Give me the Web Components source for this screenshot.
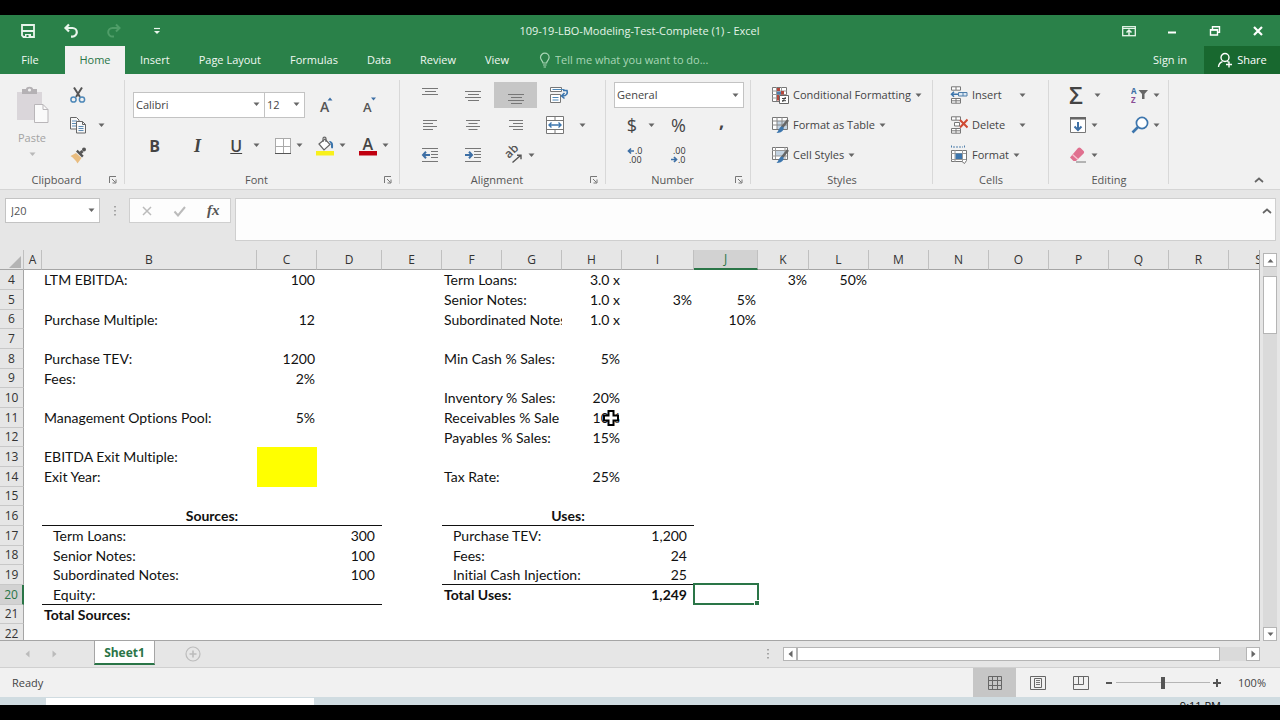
<!DOCTYPE html>
<html lang="en">
<head>
<meta charset="utf-8">
<title>109-19-LBO-Modeling-Test-Complete (1) - Excel</title>
<style>
    html, body {
        margin: 0;
        height: 100%;
        background: #000;
    }
</style>
</head>
<body>
<xl-app></xl-app>

<script>
'use strict'

// [width, height, markup]
const ICONS = {
    save: [16, 16, `<path d="M2 2h12v12H3.500L2 12.500z" fill="none" stroke="#e9f5ec" stroke-width="1.800"/><path d="M2 8h12" stroke="#e9f5ec" stroke-width="2"/><path d="M5 11h6v3H5z" fill="#e9f5ec"/><path d="M6.500 12h2v2h-2z" fill="#2a8149"/>`],
    undo: [16, 16, `<path d="M6 1.500 2.500 5 6 8.500M3 5h6.500a4.300 4.300 0 0 1 0 8.600H8" fill="none" stroke="#e9f5ec" stroke-width="2.200"/>`],
    redo: [16, 16, `<path d="M10 1.500 13.500 5 10 8.500M13 5H6.500a4.300 4.300 0 0 0 0 8.600H8" fill="none" stroke="#4f9d68" stroke-width="2"/>`],
    custom: [8, 8, `<path d="M1 1.500h6" stroke="#e9f5ec" stroke-width="1.200"/><path d="M1 4h6L4 7z" fill="#e9f5ec"/>`],
    ribbonopts: [14, 12, `<rect x=".7" y="1.700" width="12.600" height="9" fill="none" stroke="#e9f5ec" stroke-width="1.300"/><path d="M1 3.500h12" stroke="#e9f5ec"/><path d="M7 10V6M4.500 7.500 7 5l2.500 2.500" fill="none" stroke="#e9f5ec" stroke-width="1.500"/>`],
    min: [10, 10, `<path d="M1 6.500h8" stroke="#fff" stroke-width="2"/>`],
    restore: [12, 12, `<path d="M3.500 4V1.700h7v5.600H8.500M1.500 4.700h7V10h-7z" fill="none" stroke="#fff" stroke-width="1.400"/><path d="M1.500 5h7" stroke="#fff" stroke-width="1.500"/>`],
    close: [12, 12, `<path d="m2 2 8 8m0-8-8 8" stroke="#fff" stroke-width="2.200"/>`],
    bulb: [12, 16, `<path d="M4 11c0-2-2.500-3-2.500-5.500a4.300 4.300 0 0 1 8.600 0C10.100 8 7.600 9 7.600 11zM4 13h3.600M4.600 15h2.400" fill="none" stroke="#a9d6b6" stroke-width="1.200"/>`],
    person: [16, 16, `<circle cx="8" cy="5.500" r="4" fill="none" stroke="#fff" stroke-width="1.400"/><path d="M1.500 15c.3-3 1.800-4.600 4-5.300M10.300 9.300l1.200.7M9 12.500h6M12 9.500v6" fill="none" stroke="#fff" stroke-width="1.400"/>`],
    paste: [34, 38, `<path d="M2 6h25v28H2z" fill="#dad6da"/><path d="M7 3h4c0-3 7-3 7 0h4v5H7z" fill="#b4b1b4"/><circle cx="14.500" cy="4" r="1.600" fill="#f1f1f1"/><path d="M19.500 18.500H28l5 5V36.500H19.500z" fill="#fafafa" stroke="#b9b6b9"/><path d="M28 18.500v5h5" fill="none" stroke="#b9b6b9"/>`],
    cut: [18, 18, `<path d="M5 1.500 11 11M13 1.500 7 11" stroke="#555" stroke-width="2"/><circle cx="4.500" cy="13.500" r="2.600" fill="none" stroke="#4e88b8" stroke-width="1.500"/><circle cx="13" cy="13.500" r="2.600" fill="none" stroke="#4e88b8" stroke-width="1.500"/>`],
    copy: [18, 18, `<path d="M1.500 1.500h6l2.500 2.500v9H1.500z" fill="#f8f8f8" stroke="#666"/><path d="M3 5h5M3 7.500h5M3 10h4" stroke="#5c8bb5"/><path d="M7.500 5.500h6l3 3v8.500h-9z" fill="#f8f8f8" stroke="#666"/><path d="M13.500 5.500v3h3" fill="none" stroke="#666"/><path d="M9.500 10.500h5M9.500 12.500h5M9.500 14.500h5" stroke="#5c8bb5"/>`],
    painter: [18, 18, `<path d="m1.500 10 5.500-3 5.500 5-4 5.500c-1.500-3-4-5.500-7-7.500z" fill="#e9bd80"/><path d="m7 5.500 6 6 1.700-1.700-6-6z" fill="#555"/><path d="m11.500 7 2-2" stroke="#555" stroke-width="3"/><circle cx="15" cy="3.500" r="2" fill="#555"/>`],
    growfont: [16, 18, `<text x="1" y="16" font-size="14" font-weight="600" fill="#555">A</text><path d="M8.500 4.500h5L11 1.500z" fill="#3d6fa5"/>`],
    shrinkfont: [16, 18, `<text x="1" y="16" font-size="13" font-weight="600" fill="#555">A</text><path d="M9 1.500h5l-2.500 3z" fill="#3d6fa5"/>`],
    borders: [18, 18, `<path d="M1 1h16v16H1z" fill="#fff"/><path d="M1.500 1v15M9.500 1v15M16.500 1v15M1 1.500h16M1 9.500h16" fill="none" stroke="#aaa"/><path d="M1 16.500h16" stroke="#555"/>`],
    fill: [20, 20, `<path d="m4 8 6-5 5 5.500-6 5.500z" fill="#fff" stroke="#666" stroke-width="1.200"/><path d="M8 6V2.500c0-1.800 3-1.800 3 0V6" fill="none" stroke="#666" stroke-width="1.200"/><path d="M14 5c3.500 0 4.500 2 4 7-1.200 1-2.200 0-2-1.500.2-2-.5-3.500-2-5.500z" fill="#3d76ad"/><path d="M1 15h18v4.500H1z" fill="#f8f01c"/>`],
    fontcolor: [20, 20, `<text x="4.500" y="14" font-size="16" font-weight="600" fill="#444">A</text><path d="M1 15h18v4.500H1z" fill="#c00010"/>`],
    top: [18, 18, `<path d="M1 2.500h16M4 5.500h11M1 8.500h16" stroke="#777"/>`],
    middle: [18, 18, `<path d="M1 5.500h16M4 8.500h11M1 11.500h16M4 14.500h11" stroke="#777"/>`],
    bottom: [18, 18, `<path d="M1 8.500h16M4 11.500h11M1 14.500h16M4 17.500h11" stroke="#777"/>`],
    wrap: [20, 18, `<path d="M1.500 1.500h11v4h-11zM1.500 8.500h10v8h-10z" fill="#fff" stroke="#777"/><path d="M3.500 11.500h6M3.500 14h6M3.500 3.500h12" stroke="#4e88b8"/><path d="M14 4.500h4c1 3-.5 5.500-4.500 5.500M15.500 7l-3 3 3 2.500" fill="none" stroke="#3d76ad" stroke-width="1.600"/>`],
    left: [16, 14, `<path d="M1 2.500h14M1 5.500h10M1 8.500h14M1 11.500h10" stroke="#777"/>`],
    center: [16, 14, `<path d="M1 2.500h14M3.500 5.500h9M1 8.500h14M3.500 11.500h9" stroke="#777"/>`],
    right: [16, 14, `<path d="M1 2.500h14M5 5.500h10M1 8.500h14M5 11.500h10" stroke="#777"/>`],
    merge: [20, 20, `<path d="M1.500 1.500h17v17h-17z" fill="#fff" stroke="#777"/><path d="M1 5.500h18M1 14.500h18M10 1v4M10 15v4" stroke="#777"/><path d="M4 10h12M6.500 7.500 4 10l2.500 2.500M13.500 7.500 16 10l-2.500 2.500" fill="none" stroke="#3d76ad" stroke-width="1.400"/>`],
    outdent: [18, 16, `<path d="M1 1.500h16M10 4.500h7M10 7.500h7M10 10.500h7M1 14.500h16" stroke="#777"/><path d="M9 8H2M5 4.800 2 8l3 3.200" fill="none" stroke="#3d6fa5" stroke-width="2"/>`],
    indent: [18, 16, `<path d="M1 1.500h16M10 4.500h7M10 7.500h7M10 10.500h7M1 14.500h16" stroke="#777"/><path d="M1 8h7M5 4.800 8 8l-3 3.200" fill="none" stroke="#3d6fa5" stroke-width="2"/>`],
    orient: [20, 18, `<text x="0" y="0" transform="translate(5 13) rotate(-45)" font-size="12" font-weight="600" fill="#555">ab</text><path d="m8.500 16.500 8-7M13 9.300h4v4" fill="none" stroke="#555" stroke-width="1.400"/>`],
    incdec: [18, 18, `<path d="M7 5H1.500M4 2.500 1.500 5 4 7.500" fill="none" stroke="#3d6fa5" stroke-width="1.700"/><text x="8" y="8" font-size="9" fill="#333">.0</text><text x="2" y="17" font-size="9" fill="#333">.00</text>`],
    decdec: [18, 18, `<path d="M1 13.500h5.500M4 11l2.500 2.500L4 16" fill="none" stroke="#3d6fa5" stroke-width="1.700"/><text x="3" y="8" font-size="9" fill="#333">.00</text><text x="8" y="17" font-size="9" fill="#333">.0</text>`],
    cond: [18, 18, `<path d="M1.500 1.500h14v14h-14z" fill="#fff" stroke="#777"/><path d="M5.500 1v14M10.500 1v14M1 5h15M1 8.500h15M1 12h15" stroke="#999"/><path d="M6 2h3v3H6zM10 5h3v3.500h-3z" fill="#b4473c"/><path d="M6 5.500h4v3H6z" fill="#4e7eab"/><path d="M6 9h2v5.500H6z" fill="#b4473c"/><path d="M8.500 9.500h9v8h-9z" fill="#fff" stroke="#666"/><path d="M11 12.500h4M11 14.700h4M14.500 11l-3 5" stroke="#444"/>`],
    table: [18, 18, `<path d="M1.500 1.500h15v12h-15z" fill="#fff" stroke="#777"/><path d="M6 5h10v8H6z" fill="#c3d3e2"/><path d="M6 1v12M11 1v12M1 5h15M1 9h15" stroke="#888"/><path d="m17 4-6.500 8" stroke="#666" stroke-width="2.600"/><path d="M10.500 10.500c1.700 0 2.700 1.200 2 3-1 2.500-4 3.500-7 3.500 2-1.500 2.500-5.500 5-6.500z" fill="#3d76ad"/>`],
    styles: [18, 18, `<path d="M1.500 1.500h15v12h-15z" fill="#fff" stroke="#777"/><path d="M5 5h9v5H5z" fill="#c3d3e2"/><path d="M4.500 1v12M14 1v12M1 4.500h15M1 10h15" stroke="#999"/><path d="m17 4-6.500 8" stroke="#666" stroke-width="2.600"/><path d="M10.500 10.500c1.700 0 2.700 1.200 2 3-1 2.500-4 3.500-7 3.500 2-1.500 2.500-5.500 5-6.500z" fill="#3d76ad"/>`],
    insert: [18, 18, `<path d="M1.500.8h9v3.400h-9zM6 1v3M1.500 12.500h9v4.700h-9zM1.500 14.800h9M6 12.500v4.700" fill="#fff" stroke="#777"/><path d="M8.500 6.500h8.500v3.500H8.500zM13 6.500V10" fill="#dbe7f2" stroke="#4e7eab"/><path d="M8 8.200H1.500M4 5.800 1.500 8.200 4 10.700" fill="none" stroke="#3d76ad" stroke-width="1.500"/>`],
    delete: [18, 18, `<path d="M1.500.8h9v3.400h-9zM6 1v3M1.500 12.500h9v4.700h-9zM1.500 14.800h9M6 12.500v4.700M4.500 6.500h5V10h-5z" fill="#fff" stroke="#777"/><path d="m10 4 7.500 7.500M17.500 3.500 10 11.500" stroke="#cf4a33" stroke-width="2"/>`],
    format: [18, 20, `<path d="M1.500.5v3M14.500.5v3M3 2h10" stroke="#4e7eab" stroke-dasharray="2 1"/><path d="M1.500 5.500h15v10l-2 3-2.500-2H1.500z" fill="#fff" stroke="#777"/><path d="M5 5v12M12.500 5v12M1 8.500h15M1 14.500h15" stroke="#999"/><path d="M5.500 8.500h6.500v5.500H5.500z" fill="#3d76ad"/>`],
    filldown: [18, 18, `<path d="M1.500 1.500h15v15h-15z" fill="#fff" stroke="#777"/><path d="M1 2.300h16" stroke="#666" stroke-width="2.500"/><path d="M9 6v8M5.500 10.500 9 14l3.500-3.500" fill="none" stroke="#3d6fa5" stroke-width="2"/>`],
    clear: [18, 18, `<path d="m1 11.500 8-9.500c.8-.8 1.800-.8 2.600 0l3 3c.7.700.7 1.600 0 2.400L7 15H4.500z" fill="#e0708f"/><path d="m3.500 8.500 5.500 5" stroke="#f6c4d0" stroke-width="1.300"/><path d="M7 16h10" stroke="#777"/>`],
    sort: [18, 20, `<text x="0" y="9" font-size="8" font-weight="700" fill="#3d6fa5">A</text><text x="0" y="18" font-size="8" font-weight="700" fill="#8a4d95">Z</text><path d="M7.500 5H17l-3.500 4v5h-2.500V9z" fill="#666"/>`],
    find: [18, 18, `<circle cx="11" cy="7" r="5.600" fill="#fff" stroke="#3d76ad" stroke-width="1.700"/><path d="m1.500 16.500 5.500-5.500" stroke="#3d76ad" stroke-width="2.600"/>`],
    launcher: [8, 8, `<path d="M.5 7V.5H7M3 3l3.500 3.500M7 3.500V7H3.500" fill="none" stroke="#777"/>`],
    up: [10, 6, `<path d="m1 5 4-3.500L9 5" fill="none" stroke="#666" stroke-width="1.700"/>`],
    x: [12, 12, `<path d="m2 2 8 8m0-8-8 8" stroke="#bbb" stroke-width="1.500"/>`],
    check: [14, 12, `<path d="m1.500 6.500 3.500 4L12 2" fill="none" stroke="#bbb" stroke-width="2"/>`],
    dots: [4, 12, `<path d="M1 1h2v1.500H1zM1 5h2v1.500H1zM1 9h2v1.500H1z" fill="#a5a5a5"/>`],
    triup: [7, 5, `<path d="M.5 4.500h6L3.500 1z" fill="#666"/>`],
    tridown: [7, 5, `<path d="M.5.5h6L3.500 4z" fill="#666"/>`],
    trileft: [5, 8, `<path d="M4.500.5v7L.5 4z" fill="currentColor"/>`],
    triright: [5, 8, `<path d="M.5.5v7l4-3.500z" fill="currentColor"/>`],
    add: [16, 16, `<circle cx="8" cy="8" r="7" fill="none" stroke="#bcbcbc" stroke-width="1.200"/><path d="M8 4.500v7M4.500 8h7" stroke="#bcbcbc" stroke-width="1.600"/>`],
    normal: [16, 16, `<path d="M1.500 1.500h13v13h-13zM5.500 1v14M10.500 1v14M1 5.500h14M1 10.500h14" fill="none" stroke="#666"/>`],
    pagelayout: [16, 16, `<path d="M.5 1.500h15v13H.5zM4.500 3.500h7v9h-7z" fill="none" stroke="#666"/><path d="M6 5.500h4M6 7.500h4M6 9.500h4" stroke="#777"/>`],
    pagebreak: [16, 16, `<path d="M.5 1.500h15v13H.5zM.5 9.500h10v-8M5.500 1v8.500" fill="none" stroke="#666"/>`],
    minus: [8, 8, `<path d="M1 4h6" stroke="#555" stroke-width="2"/>`],
    plus: [8, 8, `<path d="M0 4h8M4 0v8" stroke="#555" stroke-width="2"/>`],
    cursor: [18, 18, `<path d="M6.500 2h5v4.500H16v5h-4.500V16h-5v-4.500H2v-5h4.500z" fill="#fff" stroke="#000" stroke-width="2"/>`]
}

const svg = name => {
    const [w, h, markup] = ICONS[name]
    return `<svg width="${w}" height="${h}" viewBox="0 0 ${w} ${h}" aria-hidden="true">${markup}</svg>`
}

const base = /* html */`
<style>
    * { box-sizing: border-box; }
    button, input, select, textarea {
        font: inherit;
        color: inherit;
        margin: 0;
        padding: 0;
        border: 0;
        border-radius: 0;
        background: none;
        outline: none;
    }
    button {
        display: flex;
        align-items: center;
        justify-content: center;
        white-space: nowrap;
    }
    svg { display: block; flex: none; }
</style>`

class XlElement extends HTMLElement {
    constructor() {
        super()
        this.attachShadow({mode: 'open'})
    }
    connectedCallback() {
        const template = document.createElement('template')
        template.innerHTML = base + this.render()
        this.shadowRoot.replaceChildren(template.content.cloneNode(true))
    }
}

// Ribbon button: optional icon, slotted text, optional drop-down arrow
class XlTool extends XlElement {
    render() {
        const icon = this.getAttribute('icon')
        const label = this.getAttribute('label')
        return /* html */`
<style>
    :host { display: flex; width: 43px; height: 26px; }
    :host([wide]) { width: auto; }
    :host([active]) { background: #c6c6c6; }
    button { flex: 1; gap: 4px; }
    :host([caret]:not([wide])) button { justify-content: flex-end; padding-right: 2px; }
    :host([wide]) button { justify-content: flex-start; }
    :host([spread]) svg:last-child { margin-left: auto; }
</style>
<button type="button" ${label ? `aria-label="${label}"` : ''}>${icon ? svg(icon) : ''}<slot></slot>${this.hasAttribute('caret') ? svg('tridown') : ''}</button>`
    }
}
customElements.define('xl-tool', XlTool)

class XlCombo extends XlElement {
    render() {
        return /* html */`
<style>
    :host { display: flex; align-items: center; height: 26px; padding-right: 4px; background: #fff; border: 1px solid #c3c3c3; }
    select { flex: 1; min-width: 0; height: 100%; padding-left: var(--inset, 2px); appearance: none; }
</style>
<select aria-label="${this.getAttribute('label')}"><option>${this.getAttribute('value')}</option></select>${svg('tridown')}`
    }
}
customElements.define('xl-combo', XlCombo)

class XlGroup extends XlElement {
    render() {
        return /* html */`
<style>
    :host { display: flex; flex-direction: column; flex: none; position: relative; }
    :host::after { content: ''; position: absolute; right: 0; top: 0; bottom: 5px; border-right: 1px solid #d8d8d8; }
    .body { height: 92px; }
    footer { display: flex; align-items: center; height: 18px; color: #555; }
    footer span { flex: 1; text-align: center; padding-left: 12px; }
    button { width: 24px; }
    i { width: 12px; }
</style>
<div class="body"><slot></slot></div>
<footer><span>${this.getAttribute('label')}</span>${this.hasAttribute('launcher') ? `<button type="button" aria-label="${this.getAttribute('label')} settings">${svg('launcher')}</button>` : '<i></i>'}</footer>`
    }
}
customElements.define('xl-group', XlGroup)

class XlTitlebar extends XlElement {
    render() {
        const btn = (icon, label) => `<button type="button" aria-label="${label}">${svg(icon)}</button>`
        return /* html */`
<style>
    :host { display: grid; grid-template-columns: 1fr auto 1fr; align-items: center; height: 31px; padding-right: 1px; color: #e4f3e8; background: #2a8149; }
    div { display: flex; padding-left: 6px; }
    div:last-child { justify-content: flex-end; }
    button { width: 43px; height: 28px; }
</style>
<div>${btn('save', 'Save')}${btn('undo', 'Undo')}${btn('redo', 'Redo')}${btn('custom', 'Customize Quick Access Toolbar')}</div>
<span>109-19-LBO-Modeling-Test-Complete (1) - Excel</span>
<div>${btn('ribbonopts', 'Ribbon Display Options')}${btn('min', 'Minimize')}${btn('restore', 'Restore Down')}${btn('close', 'Close')}</div>`
    }
}
customElements.define('xl-titlebar', XlTitlebar)

class XlTabs extends XlElement {
    render() {
        const tabs = ['Insert', 'Page Layout', 'Formulas', 'Data', 'Review', 'View']
        return /* html */`
<style>
    :host { display: flex; height: 28px; color: #f0f8f2; background: #2a8149; }
    nav { display: flex; }
    nav button { padding: 0 14px 0 15px; }
    nav .file { width: 65px; padding: 0 5px 0 0; }
    nav .home { width: 60px; padding: 0; color: #2a7547; background: #f1f1f1; }
    label { display: flex; flex: 1; align-items: center; gap: 4px; padding-left: 16px; }
    input { flex: 1; min-width: 0; }
    input::placeholder { color: #a9d6b6; opacity: 1; }
    .sign { padding: 0 17px; }
    .share { width: 76px; gap: 4px; color: #fff; background: #18682f; }
</style>
<nav><button type="button" class="file">File</button><button type="button" class="home">Home</button>${tabs.map(t => `<button type="button">${t}</button>`).join('')}</nav>
<label>${svg('bulb')}<input type="text" aria-label="Tell me what you want to do" placeholder="Tell me what you want to do..."></label>
<button type="button" class="sign">Sign in</button>
<button type="button" class="share">${svg('person')}Share</button>`
    }
}
customElements.define('xl-tabs', XlTabs)

class XlRibbon extends XlElement {
    render() {
        return /* html */`
<style>
    :host { display: flex; height: 116px; padding-top: 6px; color: #444; background: #f1f1f1; border-bottom: 1px solid #d5d5d5; }
    .row { display: flex; align-items: center; height: 30px; }
    .clipboard { width: 125px; }
    .font { width: 275px; }
    .alignment { width: 206px; }
    .number { width: 145px; }
    .styles { width: 182px; }
    .cells { width: 116px; }
    .editing { width: 120px; }
    .clip { display: flex; padding-left: 4px; }
    .paste { display: flex; flex-direction: column; justify-content: flex-start; gap: 6px; width: 56px; padding-top: 6px; color: #a3a3a3; }
    .paste svg:last-child { opacity: .4; }
    .narrow { width: 36px; }
    .arrow { width: 10px; }
    .more { width: 18px; }
    .pad { padding-left: 8px; }
    .font .row { height: 41px; }
    .font .pad { padding-top: 4px; }
    .family { width: 132px; }
    .size { width: 41px; margin-left: -1px; }
    .general { width: 130px; }
    b, .i, u, .sym { font-size: 16px; line-height: 20px; }
    b { font-weight: 700; }
    .i { font-family: "Liberation Serif", serif; font-style: italic; font-weight: 700; font-size: 18px; }
    u { font-weight: 600; }
    .sym { font-size: 18px; }
    .comma { padding-bottom: 8px; }
    .sum { font-size: 24px; line-height: 24px; font-weight: 600; }
    .styles .row, .editing .row { padding-left: 20px; }
    .cells .row { padding-left: 17px; }
    .ins { width: 76px; }
    .editing .row > :first-child { width: 62px; }
    .end { display: flex; flex: 1; align-items: flex-end; justify-content: flex-end; padding-right: 9px; }
    .end button { width: 24px; height: 18px; }
</style>
<xl-group class="clipboard" label="Clipboard" launcher>
    <div class="clip">
        <button type="button" class="paste">${svg('paste')}<span>Paste</span>${svg('tridown')}</button>
        <div>
            <div class="row"><xl-tool class="narrow" icon="cut" label="Cut"></xl-tool></div>
            <div class="row"><xl-tool class="narrow" icon="copy" label="Copy"></xl-tool><xl-tool class="arrow" icon="tridown" label="Copy options"></xl-tool></div>
            <div class="row"><xl-tool class="narrow" icon="painter" label="Format Painter"></xl-tool></div>
        </div>
    </div>
</xl-group>
<xl-group class="font" label="Font" launcher>
    <div class="pad">
        <div class="row"><xl-combo class="family" label="Font" value="Calibri"></xl-combo><xl-combo class="size" label="Font size" value="12"></xl-combo><xl-tool icon="growfont" label="Increase Font Size"></xl-tool><xl-tool icon="shrinkfont" label="Decrease Font Size"></xl-tool></div>
        <div class="row"><xl-tool><b>B</b></xl-tool><xl-tool><span class="i">I</span></xl-tool><xl-tool caret><u>U</u>&nbsp;</xl-tool><xl-tool icon="borders" label="Borders" caret></xl-tool><xl-tool icon="fill" label="Fill Color" caret></xl-tool><xl-tool icon="fontcolor" label="Font Color" caret></xl-tool></div>
    </div>
</xl-group>
<xl-group class="alignment" label="Alignment" launcher>
    <div class="pad">
        <div class="row"><xl-tool icon="top" label="Top Align"></xl-tool><xl-tool icon="middle" label="Middle Align"></xl-tool><xl-tool icon="bottom" label="Bottom Align" active></xl-tool><xl-tool icon="wrap" label="Wrap Text"></xl-tool></div>
        <div class="row"><xl-tool icon="left" label="Align Left"></xl-tool><xl-tool icon="center" label="Center"></xl-tool><xl-tool icon="right" label="Align Right"></xl-tool><xl-tool class="narrow" icon="merge" label="Merge and Center"></xl-tool><xl-tool class="more" icon="tridown" label="Merge options"></xl-tool></div>
        <div class="row"><xl-tool icon="outdent" label="Decrease Indent"></xl-tool><xl-tool icon="indent" label="Increase Indent"></xl-tool><xl-tool icon="orient" label="Orientation" caret></xl-tool></div>
    </div>
</xl-group>
<xl-group class="number" label="Number" launcher>
    <div class="pad">
        <div class="row"><xl-combo class="general" label="Number format" value="General"></xl-combo></div>
        <div class="row"><xl-tool caret><span class="sym">$</span>&nbsp;</xl-tool><xl-tool><span class="sym">%</span></xl-tool><xl-tool><b class="sym comma">,</b></xl-tool></div>
        <div class="row"><xl-tool icon="incdec" label="Increase Decimal"></xl-tool><xl-tool icon="decdec" label="Decrease Decimal"></xl-tool></div>
    </div>
</xl-group>
<xl-group class="styles" label="Styles">
    <div class="row"><xl-tool wide icon="cond" caret>Conditional Formatting</xl-tool></div>
    <div class="row"><xl-tool wide icon="table" caret>Format as Table</xl-tool></div>
    <div class="row"><xl-tool wide icon="styles" caret>Cell Styles</xl-tool></div>
</xl-group>
<xl-group class="cells" label="Cells">
    <div class="row"><xl-tool wide spread class="ins" icon="insert" caret>Insert</xl-tool></div>
    <div class="row"><xl-tool wide spread class="ins" icon="delete" caret>Delete</xl-tool></div>
    <div class="row"><xl-tool wide icon="format" caret>Format</xl-tool></div>
</xl-group>
<xl-group class="editing" label="Editing">
    <div class="row"><xl-tool wide caret><span class="sum">Σ</span>&nbsp;</xl-tool><xl-tool wide icon="sort" label="Sort and Filter" caret></xl-tool></div>
    <div class="row"><xl-tool wide icon="filldown" label="Fill" caret></xl-tool><xl-tool wide icon="find" label="Find and Select" caret></xl-tool></div>
    <div class="row"><xl-tool wide icon="clear" label="Clear" caret></xl-tool></div>
</xl-group>
<div class="end"><button type="button" aria-label="Collapse the Ribbon">${svg('up')}</button></div>`
    }
}
customElements.define('xl-ribbon', XlRibbon)

class XlFormulaBar extends XlElement {
    render() {
        return /* html */`
<style>
    :host { display: flex; align-items: flex-start; height: 60px; padding: 8px 4px 9px 5px; color: #555; background: #e6e6e6; }
    xl-combo { --inset: 5px; width: 95px; height: 25px; }
    .dots { display: flex; align-items: center; justify-content: center; width: 29px; height: 25px; }
    .fns { display: flex; width: 102px; height: 25px; margin-right: 4px; background: #fdfdfd; border: 1px solid #cfcfcf; }
    .fns button { flex: 1; }
    .fx { font: italic 700 15px "Liberation Serif", serif; }
    .entry { display: flex; flex: 1; align-self: stretch; background: #fdfdfd; border: 1px solid #cfcfcf; }
    textarea { flex: 1; resize: none; }
    .entry button { width: 16px; height: 24px; }
</style>
<xl-combo label="Name Box" value="J20"></xl-combo>
<span class="dots">${svg('dots')}</span>
<div class="fns"><button type="button" aria-label="Cancel">${svg('x')}</button><button type="button" aria-label="Enter">${svg('check')}</button><button type="button" class="fx" aria-label="Insert Function">fx</button></div>
<div class="entry"><textarea aria-label="Formula Bar"></textarea><button type="button" aria-label="Collapse Formula Bar">${svg('up')}</button></div>`
    }
}
customElements.define('xl-formula-bar', XlFormulaBar)

const COLUMNS = [
    ['A', 18], ['B', 215], ['C', 60], ['D', 65], ['E', 60], ['F', 60], ['G', 60], ['H', 60], ['I', 72], ['J', 64],
    ['K', 51], ['L', 60], ['M', 60], ['N', 60], ['O', 60], ['P', 60], ['Q', 60], ['R', 60], ['S', 60]
]

// address: [text, classes, colspan]
const CELLS = {
    B4: ['LTM EBITDA:'], C4: ['100', 'r'], F4: ['Term Loans:', '', 2], H4: ['3.0 x', 'r'], K4: ['3%', 'r'], L4: ['50%', 'r'],
    F5: ['Senior Notes:', '', 2], H5: ['1.0 x', 'r'], I5: ['3%', 'r'], J5: ['5%', 'r'],
    B6: ['Purchase Multiple:'], C6: ['12', 'r'], F6: ['Subordinated Notes', '', 2], H6: ['1.0 x', 'r'], J6: ['10%', 'r'],
    B8: ['Purchase TEV:'], C8: ['1200', 'r'], F8: ['Min Cash % Sales:', '', 2], H8: ['5%', 'r'],
    B9: ['Fees:'], C9: ['2%', 'r'],
    F10: ['Inventory % Sales:', '', 2], H10: ['20%', 'r'],
    B11: ['Management Options Pool:'], C11: ['5%', 'r'], F11: ['Receivables % Sale', '', 2], H11: ['10%', 'r pointer'],
    F12: ['Payables % Sales:', '', 2], H12: ['15%', 'r'],
    B13: ['EBITDA Exit Multiple:'], C13: ['', 'input'],
    B14: ['Exit Year:'], C14: ['', 'input'], F14: ['Tax Rate:', '', 2], H14: ['25%', 'r'],
    B16: ['Sources:', 'c bold line', 3], F16: ['Uses:', 'c bold line', 4],
    B17: ['Term Loans:', 'in'], D17: ['300', 'r acc'], F17: ['Purchase TEV:', 'in', 3], I17: ['1,200', 'r acc'],
    B18: ['Senior Notes:', 'in'], D18: ['100', 'r acc'], F18: ['Fees:', 'in', 3], I18: ['24', 'r acc'],
    B19: ['Subordinated Notes:', 'in'], D19: ['100', 'r acc'], F19: ['Initial Cash Injection:', 'in line', 3], I19: ['25', 'r acc line'],
    B20: ['Equity:', 'in line'], C20: ['', 'line'], D20: ['', 'line'], F20: ['Total Uses:', 'bold', 3], I20: ['1,249', 'r acc bold'], J20: ['', 'active'],
    B21: ['Total Sources:', 'bold']
}

class XlSheet extends XlElement {
    row(n) {
        let html = `<tr><th scope="row" class="${n === 20 ? 'on' : ''}">${n}</th>`
        for (let i = 0; i < COLUMNS.length;) {
            const [text, cls, span = 1] = CELLS[COLUMNS[i][0] + n] || ['', '']
            const extra = /pointer/.test(cls) ? svg('cursor') : /active/.test(cls) ? '<i></i>' : ''
            html += `<td class="${cls || ''}" colspan="${span}">${text}${extra}</td>`
            i += span
        }
        return html + '</tr>'
    }
    render() {
        let rows = ''
        for (let n = 4; n <= 22; n++) { rows += this.row(n) }
        const width = COLUMNS.reduce((sum, c) => sum + c[1], 24)
        return /* html */`
<style>
    :host { display: flex; flex: 1; min-height: 0; background: #e6e6e6; }
    .view { flex: 1; min-width: 0; overflow: hidden; background: #fff; border-right: 1px solid #a5a5a5; border-bottom: 1px solid #a5a5a5; }
    table { table-layout: fixed; border-collapse: separate; border-spacing: 0; color: #111; }
    tr { height: 20px; }
    tbody tr:nth-child(3n) { height: 19px; }
    th, td { padding: 0; line-height: 18px; white-space: nowrap; overflow: hidden; }
    th { font-weight: 400; font-size: 12px; color: #333; background: #e6e6e6; }
    thead th { border-bottom: 1px solid #a5a5a5; border-right: 1px solid #c0c0c0; }
    thead th.on { color: #2a7547; background: #d2d2d2; border-bottom: 2px solid #2a7547; }
    tbody th { border-right: 1px solid #a5a5a5; border-bottom: 1px solid #c8c8c8; }
    tbody th.on { color: #2a7547; background: #d2d2d2; border-right: 2px solid #2a7547; }
    .corner svg { margin: 4px 0 0 9px; }
    td { padding: 0 2px; font-family: Lato, sans-serif; font-size: 14px; font-variant-ligatures: none; }
    .r { text-align: right; }
    .c { text-align: center; }
    .in { padding-left: 11px; }
    .acc { padding-right: 7px; }
    .bold { font-weight: 700; }
    .line { box-shadow: inset 0 -1px #111; }
    .input { background: #ff0; }
    .active, .pointer { position: relative; overflow: visible; }
    .active i { position: absolute; inset: -2px -1px 0; border: 2px solid #2a7547; }
    .active i::after { content: ''; position: absolute; right: -3px; bottom: -3px; width: 4px; height: 4px; background: #2a7547; border: 1px solid #fff; }
    .pointer svg { position: absolute; right: 2px; top: 1px; }
    .scroll { display: flex; flex-direction: column; width: 14px; margin: 3px 3px 0 3px; background: #dadada; }
    .scroll button { height: 14px; background: #fff; border: 1px solid #b5b5b5; }
    .scroll div { flex: 1; padding-top: 9px; }
    .scroll span { display: block; height: 58px; background: #fff; border: 1px solid #b5b5b5; }
</style>
<div class="view">
    <table style="width: ${width}px">
        <colgroup><col style="width: 24px">${COLUMNS.map(c => `<col style="width: ${c[1]}px">`).join('')}</colgroup>
        <thead><tr><th class="corner"><svg width="12" height="12"><path d="M12 0v12H0z" fill="#b4b4b4"/></svg></th>${COLUMNS.map(c => `<th scope="col" class="${c[0] === 'J' ? 'on' : ''}">${c[0]}</th>`).join('')}</tr></thead>
        <tbody>${rows}</tbody>
    </table>
</div>
<div class="scroll"><button type="button" aria-label="Scroll up">${svg('triup')}</button><div><span></span></div><button type="button" aria-label="Scroll down">${svg('tridown')}</button></div>`
    }
}
customElements.define('xl-sheet', XlSheet)

class XlSheetTabs extends XlElement {
    render() {
        return /* html */`
<style>
    :host { display: flex; height: 27px; color: #666; background: #e6e6e6; border-bottom: 1px solid #d0d0d0; }
    .nav { display: flex; width: 94px; padding-left: 14px; color: #bbb; }
    .nav button { width: 27px; }
    .tab { width: 61px; height: 24px; padding-top: 2px; font-size: 12px; font-weight: 700; color: #2a7547; background: #fff; border: solid #a5a5a5; border-width: 0 1px; border-bottom: 2px solid #2a7547; }
    .add { width: 76px; }
    .bar { display: flex; align-items: center; width: 514px; margin-left: auto; padding-right: 20px; }
    .bar > svg { margin-right: 13px; }
    .bar button { width: 14px; height: 14px; background: #fff; border: 1px solid #b5b5b5; }
    .track { flex: 1; height: 14px; padding-right: 26px; background: #dadada; }
    .track span { display: block; height: 14px; background: #fff; border: 1px solid #b5b5b5; }
</style>
<div class="nav"><button type="button" aria-label="Previous sheet">${svg('trileft')}</button><button type="button" aria-label="Next sheet">${svg('triright')}</button></div>
<button type="button" class="tab">Sheet1</button>
<button type="button" class="add" aria-label="New sheet">${svg('add')}</button>
<div class="bar">${svg('dots')}<button type="button" aria-label="Scroll left">${svg('trileft')}</button><div class="track"><span></span></div><button type="button" aria-label="Scroll right">${svg('triright')}</button></div>`
    }
}
customElements.define('xl-sheet-tabs', XlSheetTabs)

class XlStatus extends XlElement {
    render() {
        return /* html */`
<style>
    :host { display: flex; align-items: center; height: 29px; padding: 0 14px 0 12px; color: #444; background: #f1f1f1; }
    .ready { flex: 1; }
    .view { width: 43px; height: 29px; }
    .on { background: #c6c6c6; }
    .step { width: 14px; height: 20px; }
    input { width: 94px; height: 14px; appearance: none; background: linear-gradient(#b5b5b5, #b5b5b5) center / 100% 1px no-repeat; }
    input::-webkit-slider-thumb { appearance: none; width: 4px; height: 12px; background: #555; }
    output { width: 42px; text-align: right; }
</style>
<span class="ready">Ready</span>
<button type="button" class="view on" aria-label="Normal">${svg('normal')}</button>
<button type="button" class="view" aria-label="Page Layout">${svg('pagelayout')}</button>
<button type="button" class="view" aria-label="Page Break Preview">${svg('pagebreak')}</button>
<button type="button" class="step" aria-label="Zoom Out">${svg('minus')}</button>
<input type="range" aria-label="Zoom" min="0" max="200" value="100">
<button type="button" class="step" aria-label="Zoom In">${svg('plus')}</button>
<output>100%</output>`
    }
}
customElements.define('xl-status', XlStatus)

class XlTaskbar extends XlElement {
    render() {
        return /* html */`
<style>
    :host { display: flex; height: 8px; overflow: hidden; color: #111; background: #d0dce1; }
    .search { width: 268px; margin: 1px 0 0 46px; background: #fff; }
    time { margin-left: auto; padding-right: 59px; line-height: 18px; }
</style>
<div class="search"></div>
<time>9:11 PM</time>`
    }
}
customElements.define('xl-taskbar', XlTaskbar)

class XlApp extends XlElement {
    render() {
        return /* html */`
<style>
    :host { display: flex; flex-direction: column; box-sizing: border-box; height: 100vh; padding: 15px 0; font: 11px/16px "Open Sans", "Noto Sans", sans-serif; background: #000; }
</style>
<xl-titlebar></xl-titlebar>
<xl-tabs></xl-tabs>
<xl-ribbon></xl-ribbon>
<xl-formula-bar></xl-formula-bar>
<xl-sheet></xl-sheet>
<xl-sheet-tabs></xl-sheet-tabs>
<xl-status></xl-status>
<xl-taskbar></xl-taskbar>`
    }
}
customElements.define('xl-app', XlApp)
</script>
</body>
</html>
